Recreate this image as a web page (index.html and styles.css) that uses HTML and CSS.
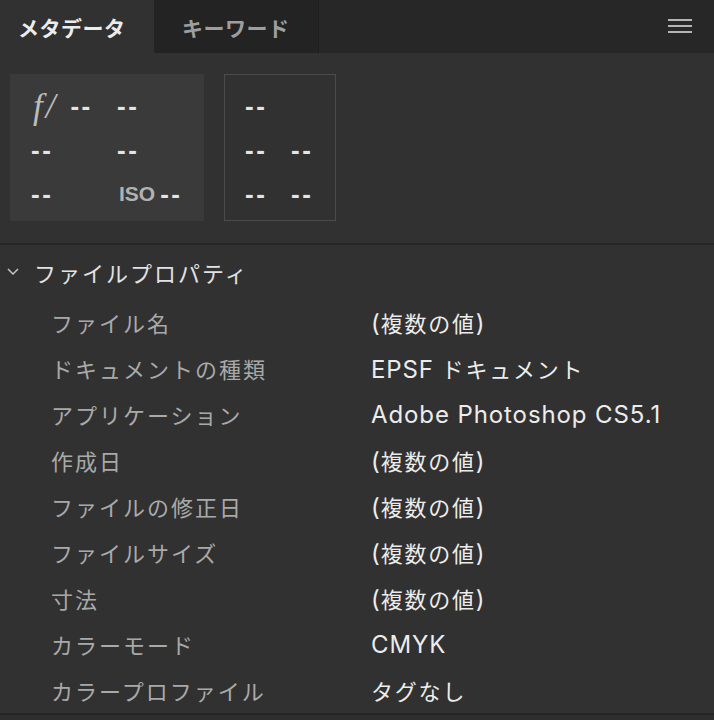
FILE: index.html
```html
<!DOCTYPE html>
<html lang="ja">
<head>
<meta charset="utf-8">
<title>メタデータ</title>
<link rel="stylesheet" href="styles.css">
</head>
<body>
<div class="panel">
  <div class="tabs">
    <div class="tab tab-active">メタデータ</div>
    <div class="tab tab-inactive">キーワード</div>
    <div class="tabs-fill">
      <svg class="menu" width="24" height="14" viewBox="0 0 24 14">
        <rect x="0" y="0" width="24" height="2" fill="#b4b4b4"/>
        <rect x="0" y="6" width="24" height="2" fill="#b4b4b4"/>
        <rect x="0" y="12" width="24" height="2" fill="#b4b4b4"/>
      </svg>
    </div>
  </div>

  <div class="summary">
    <div class="box exif">
      <div class="cell"><span class="fstop">f/</span><span class="dash">--</span></div>
      <div class="cell"><span class="dash">--</span></div>
      <div class="cell"><span class="dash">--</span></div>
      <div class="cell"><span class="dash">--</span></div>
      <div class="cell"><span class="dash">--</span></div>
      <div class="cell"><span class="iso">ISO</span><span class="dash">--</span></div>
    </div>
    <div class="box dims">
      <div class="cell"><span class="dash">--</span></div>
      <div class="cell"></div>
      <div class="cell"><span class="dash">--</span></div>
      <div class="cell"><span class="dash">--</span></div>
      <div class="cell"><span class="dash">--</span></div>
      <div class="cell"><span class="dash">--</span></div>
    </div>
  </div>

  <div class="divider"></div>

  <div class="section-head">
    <svg class="chevron" width="12" height="7" viewBox="0 0 12 7">
      <path d="M1 1 L6 6 L11 1" fill="none" stroke="#c4c4c4" stroke-width="1.5"/>
    </svg>
    <span class="section-title">ファイルプロパティ</span>
  </div>

  <div class="props">
    <div class="row"><span class="label">ファイル名</span><span class="value">(<span class="jp">複数の値</span>)</span></div>
    <div class="row"><span class="label">ドキュメントの種類</span><span class="value">EPSF <span class="jp">ドキュメント</span></span></div>
    <div class="row"><span class="label">アプリケーション</span><span class="value">Adobe Photoshop CS5.1</span></div>
    <div class="row"><span class="label">作成日</span><span class="value">(<span class="jp">複数の値</span>)</span></div>
    <div class="row"><span class="label">ファイルの修正日</span><span class="value">(<span class="jp">複数の値</span>)</span></div>
    <div class="row"><span class="label">ファイルサイズ</span><span class="value">(<span class="jp">複数の値</span>)</span></div>
    <div class="row"><span class="label">寸法</span><span class="value">(<span class="jp">複数の値</span>)</span></div>
    <div class="row"><span class="label">カラーモード</span><span class="value">CMYK</span></div>
    <div class="row"><span class="label">カラープロファイル</span><span class="value"><span class="jp">タグなし</span></span></div>
  </div>
  <div class="footer"></div>
</div>
</body>
</html>
```

FILE: styles.css
```css
html, body {
  margin: 0;
  padding: 0;
  background: #313131;
}

body {
  font-family: Inter, "Noto Sans CJK JP", sans-serif;
  color: #e6e6e6;
  width: 714px;
  height: 720px;
  overflow: hidden;
}

.panel {
  display: flex;
  flex-direction: column;
}

/* Tabs */
.tabs {
  display: flex;
  height: 53px;
  background: #272727;
}

.tab {
  display: flex;
  align-items: center;
  font-family: "Noto Sans CJK JP", sans-serif;
  font-weight: 700;
  font-size: 21px;
  letter-spacing: 0.5px;
  box-sizing: border-box;
}

.tab-active {
  width: 154px;
  padding-left: 18px;
  background: #313131;
  color: #ececec;
}

.tab-inactive {
  width: 165px;
  padding-left: 28px;
  background: #232323;
  color: #9e9e9e;
  border-right: 1px solid #1d1d1d;
}

.tabs-fill {
  flex: 1;
  display: flex;
  align-items: center;
  justify-content: flex-end;
  padding-right: 22px;
}

.menu {
  display: block;
  margin-top: -1px;
}

/* Summary boxes */
.summary {
  display: flex;
  gap: 20px;
  padding: 21px 0 0 10px;
  height: 147px;
}

.box {
  display: grid;
  grid-auto-rows: 44px;
  box-sizing: border-box;
  height: 147px;
  padding-top: 10px;
}

.exif {
  width: 194px;
  background: #3a3a3a;
  padding-left: 21px;
  grid-template-columns: 86px 1fr;
}

.dims {
  width: 112px;
  border: 1px solid #4b4b4b;
  padding-top: 9px;
  padding-left: 20px;
  grid-template-columns: 46px 1fr;
}

.cell {
  display: flex;
  align-items: center;
}

.dash {
  font-family: "Liberation Sans", sans-serif;
  font-weight: 700;
  font-size: 26px;
  letter-spacing: 2.5px;
  color: #e4e4e4;
  line-height: 1;
}

.fstop {
  font-family: "Liberation Serif", serif;
  font-style: italic;
  font-size: 35px;
  color: #bcbcbc;
  letter-spacing: 3px;
  margin-left: 2px;
  margin-right: 12px;
  line-height: 1;
}

.iso {
  font-family: "Liberation Sans", sans-serif;
  font-weight: 700;
  font-size: 21px;
  color: #b2b2b2;
  margin-left: 2px;
  margin-right: 5px;
}

/* Divider */
.divider {
  margin-top: 22px;
  height: 2px;
  background: #262626;
}

/* Section */
.section-head {
  display: flex;
  align-items: center;
  height: 54px;
  padding-left: 7px;
  gap: 15px;
}

.chevron {
  display: block;
  margin-top: -2px;
}

.section-title {
  font-family: "Noto Sans CJK JP", sans-serif;
  font-size: 22px;
  letter-spacing: 2px;
  color: #e2e2e2;
}

/* Properties */
.props {
  display: flex;
  flex-direction: column;
}

.row {
  display: grid;
  grid-template-columns: 320px 1fr;
  height: 46px;
  align-items: center;
  padding-left: 51px;
}

.label {
  font-family: "Noto Sans CJK JP", sans-serif;
  font-size: 22px;
  letter-spacing: 2px;
  color: #a9a9a9;
}

.value {
  font-size: 24px;
  letter-spacing: 0.9px;
  color: #ececec;
}

.jp {
  font-family: "Noto Sans CJK JP", sans-serif;
  font-size: 22px;
  letter-spacing: 1.8px;
}

.footer {
  border-top: 2px solid #252525;
  background: #2e2e2e;
  height: 20px;
}
```
